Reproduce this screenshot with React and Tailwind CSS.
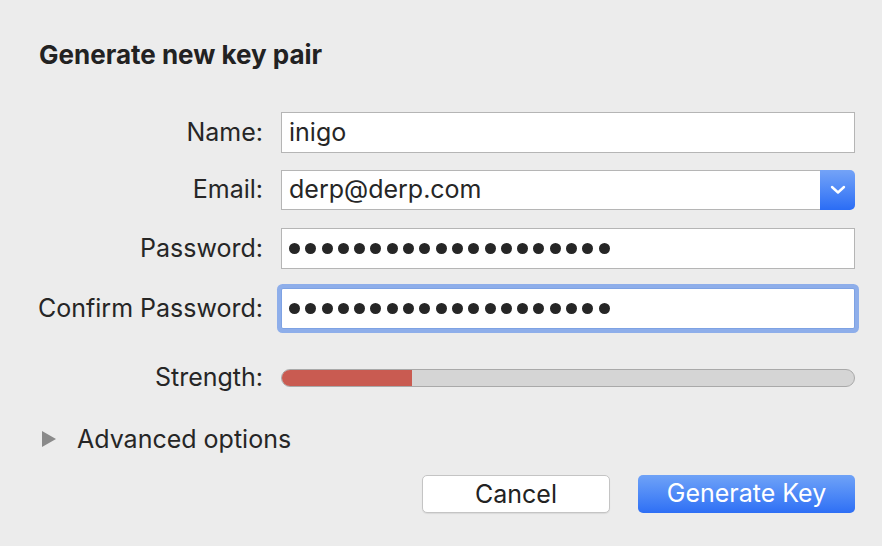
import React from 'react';

const font = { fontFamily: 'Inter, "Noto Sans", sans-serif' };

const Row = ({ label, children, className = '' }) => (
  <div className={`flex items-center ${className}`}>
    <div className="w-[263px] shrink-0 text-right text-[25px] text-[#262626] tracking-[0px]">{label}</div>
    <div className="ml-[18px] flex-1">{children}</div>
  </div>
);

const Dots = () => (
  <div className="flex items-center gap-[5.3px] pl-[7px]">
    {Array.from({ length: 20 }).map((_, i) => (
      <span key={i} className="block h-[11px] w-[11px] rounded-full bg-[#262626]" />
    ))}
  </div>
);

export default function App() {
  return (
    <div className="h-[546px] w-[882px] overflow-hidden bg-[#ececec] text-[#262626]" style={font}>
      <div className="px-[39px] pt-[39px]">
        <h1 className="text-[26px] font-bold leading-[32px] text-[#222]">Generate new key pair</h1>
      </div>

      <div className="mt-[41px] flex flex-col pr-[27px]">
        {/* Name */}
        <Row label="Name:">
          <div className="flex h-[41px] items-center border border-[#b5b5b5] bg-white pl-[7px] text-[25px]">inigo</div>
        </Row>

        {/* Email */}
        <Row label="Email:" className="mt-[17px]">
          <div className="flex h-[40px]">
            <div className="flex flex-1 items-center border border-r-0 border-[#b5b5b5] bg-white pl-[7px] text-[25px]">derp@derp.com</div>
            <div className="flex w-[35px] items-center justify-center rounded-r-[5px] bg-gradient-to-b from-[#74a3f7] to-[#2a6cf5]">
              <svg width="16" height="10" viewBox="0 0 16 10" fill="none">
                <path d="M2 2l6 5.5L14 2" stroke="white" strokeWidth="2.4" strokeLinecap="round" strokeLinejoin="round" />
              </svg>
            </div>
          </div>
        </Row>

        {/* Password */}
        <Row label="Password:" className="mt-[18px]">
          <div className="flex h-[41px] items-center border border-[#b5b5b5] bg-white">
            <Dots />
          </div>
        </Row>

        {/* Confirm Password */}
        <Row label="Confirm Password:" className="mt-[19px]">
          <div className="flex h-[41px] items-center rounded-[2px] border border-[#7ea2e3] bg-white shadow-[0_0_0_4px_#8eaeea]">
            <Dots />
          </div>
        </Row>

        {/* Strength */}
        <Row label="Strength:" className="mt-[30px]">
          <div className="relative h-[18px] overflow-hidden rounded-full border border-[#a9a9a9] bg-[#d5d5d5]">
            <div className="h-full w-[130px] bg-[#c95b51]" />
          </div>
        </Row>
      </div>

      {/* Advanced options */}
      <div className="mt-[24px] flex items-center pl-[42px]">
        <svg width="14" height="16" viewBox="0 0 14 16">
          <path d="M0 0L14 8L0 16Z" fill="#8a8a8a" />
        </svg>
        <span className="ml-[21px] text-[25px]">Advanced options</span>
      </div>

      {/* Buttons */}
      <div className="mt-[17px] flex justify-end gap-[28px] pr-[27px]">
        <button className="h-[38px] w-[188px] rounded-[5px] border border-[#c4c4c4] bg-white text-[25px] text-[#222] shadow-[0_1px_1px_rgba(0,0,0,0.08)]">
          Cancel
        </button>
        <button className="h-[38px] w-[217px] rounded-[5px] bg-gradient-to-b from-[#6fa2f7] to-[#2e6ff5] text-[25px] text-white">
          Generate Key
        </button>
      </div>
    </div>
  );
}
